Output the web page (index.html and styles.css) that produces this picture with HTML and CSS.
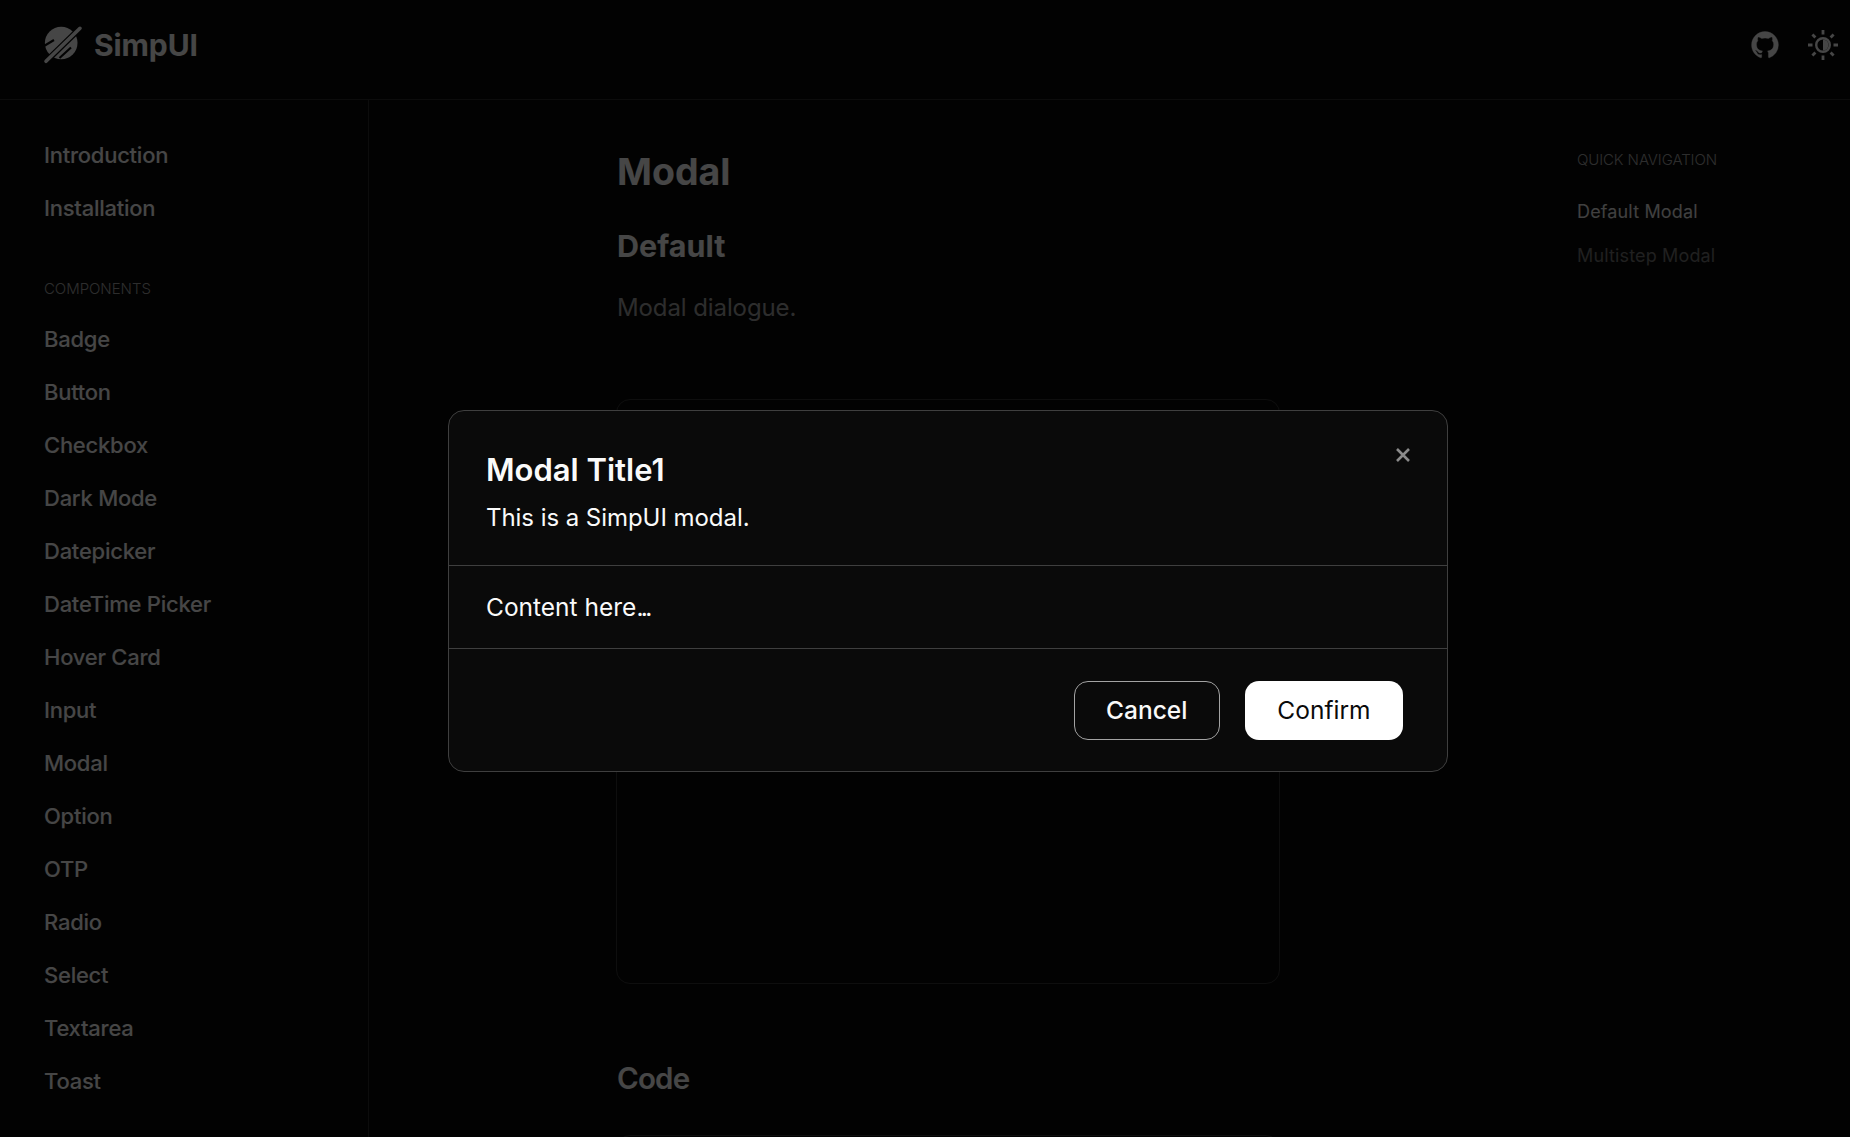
FILE: index.html
```html
<!DOCTYPE html>
<html lang="en">
<head>
<meta charset="utf-8">
<title>SimpUI Modal</title>
<link rel="stylesheet" href="styles.css">
</head>
<body>
<header class="topbar">
  <a class="brand">
    <svg class="logo" viewBox="0 0 38 38"><circle class="logo-disc" cx="17.2" cy="17" r="16.3"/><path class="logo-cut" d="M1 36.3 37 1.3"/><path class="logo-notch" d="M0 20 10 14M15.5 32 27 21.5"/><path class="logo-line" d="M2 35.3 36 2.3"/></svg>
    <span class="brand-name">SimpUI</span>
  </a>
  <div class="top-actions">
    <svg class="gh" viewBox="0 0 24 24"><path d="M12 .5C5.65.5.5 5.65.5 12c0 5.08 3.29 9.39 7.86 10.91.58.1.79-.25.79-.55v-2.14c-3.2.7-3.87-1.36-3.87-1.36-.52-1.33-1.28-1.68-1.28-1.68-1.05-.72.08-.7.08-.7 1.16.08 1.77 1.19 1.77 1.19 1.03 1.76 2.7 1.25 3.36.96.1-.75.4-1.25.73-1.54-2.55-.29-5.24-1.28-5.24-5.69 0-1.26.45-2.28 1.19-3.09-.12-.29-.52-1.46.11-3.05 0 0 .97-.31 3.17 1.18a11 11 0 0 1 5.77 0c2.2-1.49 3.17-1.18 3.17-1.18.63 1.59.23 2.76.11 3.05.74.81 1.19 1.83 1.19 3.09 0 4.42-2.69 5.39-5.25 5.68.41.36.78 1.05.78 2.12v3.15c0 .31.21.66.8.55A11.5 11.5 0 0 0 23.5 12C23.5 5.65 18.35.5 12 .5Z"/></svg>
    <svg class="sun" viewBox="0 0 30 30"><circle cx="15" cy="15" r="6.8" class="sun-ring"/><path class="sun-half" d="M15 9.5a5.5 5.5 0 0 1 0 11Z"/><path class="sun-rays" d="M15 0v4.5M15 25.5V30M0 15h4.5M25.5 15H30M4.4 4.4l3 3M22.6 22.6l3 3M4.4 25.6l3-3M22.6 7.4l3-3"/></svg>
  </div>
</header>
<div class="layout">
  <aside class="sidebar">
    <nav class="nav-group first">
      <a class="nav-item">Introduction</a>
      <a class="nav-item">Installation</a>
    </nav>
    <p class="nav-label">COMPONENTS</p>
    <nav class="nav-group">
      <a class="nav-item">Badge</a>
      <a class="nav-item">Button</a>
      <a class="nav-item">Checkbox</a>
      <a class="nav-item">Dark Mode</a>
      <a class="nav-item">Datepicker</a>
      <a class="nav-item">DateTime Picker</a>
      <a class="nav-item">Hover Card</a>
      <a class="nav-item">Input</a>
      <a class="nav-item">Modal</a>
      <a class="nav-item">Option</a>
      <a class="nav-item">OTP</a>
      <a class="nav-item">Radio</a>
      <a class="nav-item">Select</a>
      <a class="nav-item">Textarea</a>
      <a class="nav-item">Toast</a>
    </nav>
  </aside>
  <main class="content">
    <h1 class="page-title">Modal</h1>
    <h2 class="section-title">Default</h2>
    <p class="section-desc">Modal dialogue.</p>
    <div class="preview"></div>
    <h2 class="section-title code-title">Code</h2>
    <div class="code-block"></div>
  </main>
  <aside class="toc">
    <p class="toc-label">QUICK NAVIGATION</p>
    <a class="toc-item active">Default Modal</a>
    <a class="toc-item">Multistep Modal</a>
  </aside>
</div>
<div class="overlay"></div>
<section class="modal">
  <button class="close" aria-label="Close"><svg viewBox="0 0 16 16"><path d="M2 2l12 12M14 2 2 14"/></svg></button>
  <div class="modal-head">
    <h3 class="modal-title">Modal Title1</h3>
    <p class="modal-sub">This is a SimpUI modal.</p>
  </div>
  <div class="modal-body"><span>Content here<span class="dots">...</span></span></div>
  <div class="modal-foot">
    <button class="btn btn-outline">Cancel</button>
    <button class="btn btn-solid">Confirm</button>
  </div>
</section>
</body>
</html>
```
FILE: styles.css
```css
* { box-sizing: border-box; }
html, body { margin: 0; height: 100%; overflow: hidden; }
body { background: #0a0a0a; color: #fafafa; font-family: Inter, "Liberation Sans", sans-serif; }
p, h1, h2, h3 { margin: 0; }

.topbar { height: 100px; border-bottom: 1px solid #2e2e2e; display: flex; align-items: center; justify-content: space-between; padding: 0 12px 10px 44px; }
.brand { display: flex; align-items: center; gap: 12px; }
.logo { width: 38px; height: 38px; overflow: visible; }
.logo-disc { fill: #fafafa; }
.logo-cut { stroke: #0a0a0a; stroke-width: 6; fill: none; }
.logo-notch { stroke: #0a0a0a; stroke-width: 2.2; fill: none; }
.logo-line { stroke: #fafafa; stroke-width: 3.6; stroke-linecap: round; fill: none; }
.brand-name { font-size: 30px; font-weight: 700; letter-spacing: -0.1px; }
.top-actions { display: flex; align-items: center; gap: 29px; }
.gh { width: 28px; height: 28px; fill: #fafafa; stroke: #fafafa; stroke-width: 0.3; }
.sun { width: 30px; height: 30px; }
.sun-ring { fill: none; stroke: #fafafa; stroke-width: 2.4; }
.sun-half { fill: #fafafa; }
.sun-rays { fill: none; stroke: #fafafa; stroke-width: 2.8; }

.layout { display: flex; height: 1037px; }
.sidebar { width: 369px; flex: none; border-right: 1px solid #2e2e2e; padding: 28px 0 0 44px; }
.nav-group { display: flex; flex-direction: column; }
.nav-item { height: 53px; display: flex; align-items: center; font-size: 22px; font-weight: 500; letter-spacing: -0.25px; }
.nav-label { font-size: 15px; font-weight: 300; letter-spacing: -0.05px; color: #a3a3a3; margin: 45px 0 13px; line-height: 20px; }

.content { width: 912px; flex: none; padding: 50px 0 0 248px; overflow: hidden; }
.page-title { font-size: 37.5px; font-weight: 700; line-height: 44px; }
.section-title { font-size: 30.5px; font-weight: 700; line-height: 38px; margin-top: 33px; }
.section-desc { font-size: 24px; color: #a3a3a3; line-height: 32px; margin-top: 27px; letter-spacing: -0.1px; }
.preview { width: 664px; height: 585px; border: 1px solid #333; border-radius: 14px; margin: 75px 0 0 -1px; }
.code-title { margin-top: 75px; font-size: 29.5px; font-weight: 600; letter-spacing: -0.8px; }
.code-block { width: 664px; height: 100px; border: 1px solid #333; border-radius: 14px; margin: 38px 0 0 -1px; }

.toc { padding: 50px 0 0 296px; display: flex; flex-direction: column; white-space: nowrap; }
.toc-label { font-size: 15px; font-weight: 300; letter-spacing: -0.1px; color: #a3a3a3; line-height: 20px; margin-bottom: 20px; }
.toc-item { font-size: 18px; line-height: 44px; color: #737373; font-weight: 400; letter-spacing: 0.15px; }
.toc-item.active { color: #e5e5e5; letter-spacing: 0.15px; }

.overlay { position: fixed; inset: 0; background: rgba(0, 0, 0, 0.72); }

.modal { position: fixed; left: 448px; top: 410px; width: 1000px; height: 362px; background: #0a0a0a; border: 1px solid #3f3f3f; border-radius: 16px; display: flex; flex-direction: column; }
.close { position: absolute; right: 36px; top: 36px; width: 16px; height: 16px; padding: 0; background: none; border: 0; }
.close svg { display: block; width: 16px; height: 16px; fill: none; stroke: #8a8a8a; stroke-width: 2.6; }
.modal-head { height: 155px; padding: 40px 38px 0 37px; border-bottom: 1px solid #3f3f3f; }
.modal-title { font-size: 31px; font-weight: 600; line-height: 38px; }
.modal-sub { font-size: 24px; line-height: 32px; margin-top: 13px; letter-spacing: -0.05px; }
.modal-body { height: 83px; padding: 0 37px; display: flex; align-items: center; font-size: 24.5px; border-bottom: 1px solid #3f3f3f; }
.dots { letter-spacing: -2.6px; }
.modal-foot { flex: 1; display: flex; align-items: center; justify-content: flex-end; gap: 25px; padding: 0 44px 0 0; }
.btn { height: 59px; border-radius: 14px; font: 500 24.5px Inter, "Liberation Sans", sans-serif; padding: 0 31.5px; }
.btn-outline { background: #0a0a0a; color: #fafafa; border: 1px solid #a3a3a3; }
.btn-solid { background: #fff; color: #0a0a0a; border: 0; font-weight: 400; padding: 0 32.5px; }
```
